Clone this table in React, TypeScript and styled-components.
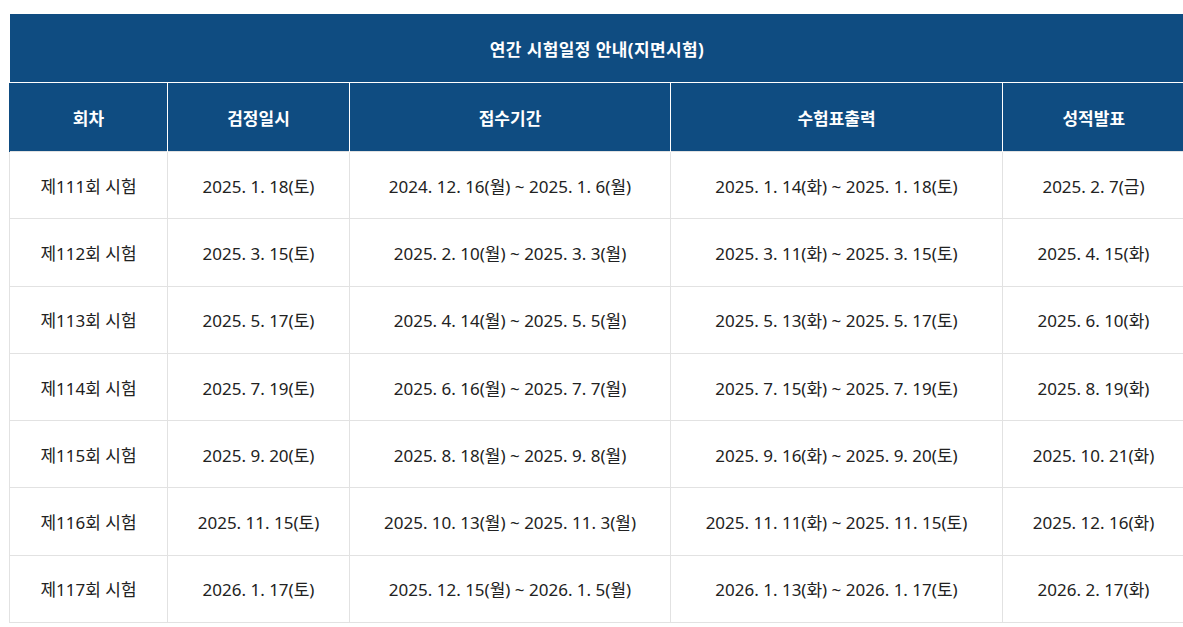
import React from 'react'
import styled, { createGlobalStyle } from 'styled-components'

const GlobalStyle = createGlobalStyle`
  body {
    margin: 0;
    background: #fff;
    font-family: 'Noto Sans', 'Noto Sans CJK KR', sans-serif;
  }
`

interface Exam {
  round: string
  date: string
  apply: string
  ticket: string
  result: string
}

const exams: Exam[] = [
  { round: '제111회 시험', date: '2025. 1. 18(토)', apply: '2024. 12. 16(월) ~ 2025. 1. 6(월)', ticket: '2025. 1. 14(화) ~ 2025. 1. 18(토)', result: '2025. 2. 7(금)' },
  { round: '제112회 시험', date: '2025. 3. 15(토)', apply: '2025. 2. 10(월) ~ 2025. 3. 3(월)', ticket: '2025. 3. 11(화) ~ 2025. 3. 15(토)', result: '2025. 4. 15(화)' },
  { round: '제113회 시험', date: '2025. 5. 17(토)', apply: '2025. 4. 14(월) ~ 2025. 5. 5(월)', ticket: '2025. 5. 13(화) ~ 2025. 5. 17(토)', result: '2025. 6. 10(화)' },
  { round: '제114회 시험', date: '2025. 7. 19(토)', apply: '2025. 6. 16(월) ~ 2025. 7. 7(월)', ticket: '2025. 7. 15(화) ~ 2025. 7. 19(토)', result: '2025. 8. 19(화)' },
  { round: '제115회 시험', date: '2025. 9. 20(토)', apply: '2025. 8. 18(월) ~ 2025. 9. 8(월)', ticket: '2025. 9. 16(화) ~ 2025. 9. 20(토)', result: '2025. 10. 21(화)' },
  { round: '제116회 시험', date: '2025. 11. 15(토)', apply: '2025. 10. 13(월) ~ 2025. 11. 3(월)', ticket: '2025. 11. 11(화) ~ 2025. 11. 15(토)', result: '2025. 12. 16(화)' },
  { round: '제117회 시험', date: '2026. 1. 17(토)', apply: '2025. 12. 15(월) ~ 2026. 1. 5(월)', ticket: '2026. 1. 13(화) ~ 2026. 1. 17(토)', result: '2026. 2. 17(화)' },
]

const Wrap = styled.div`
  padding: 14px 0 0 9px;
`

const Table = styled.table`
  width: 1175px;
  border-collapse: collapse;
  table-layout: fixed;
  font-size: 17px;
`

const TitleCell = styled.th`
  height: 68px;
  background: #0f4c81;
  color: #fff;
  font-weight: 700;
  font-size: 17px;
  letter-spacing: 0.4px;
  text-align: center;
  border-bottom: 1px solid #fff;
  padding: 0;
`

const HeadCell = styled.th`
  height: 68px;
  background: #0f4c81;
  color: #fff;
  font-weight: 700;
  text-align: center;
  padding: 0;
  border-left: 1px solid #fff;
  &:first-child { border-left: 1px solid #0f4c81; }
`

const Cell = styled.td`
  height: 66.3px;
  color: #222;
  text-align: center;
  padding: 0;
  border: 1px solid #e2e2e2;
`

const cols = [158, 182, 321, 332, 182]

export default function App() {
  return (
    <Wrap>
      <GlobalStyle />
      <Table>
        <colgroup>
          {cols.map((w, i) => <col key={i} style={{ width: w }} />)}
        </colgroup>
        <thead>
          <tr>
            <TitleCell colSpan={5}>연간 시험일정 안내(지면시험)</TitleCell>
          </tr>
          <tr>
            <HeadCell>회차</HeadCell>
            <HeadCell>검정일시</HeadCell>
            <HeadCell>접수기간</HeadCell>
            <HeadCell>수험표출력</HeadCell>
            <HeadCell>성적발표</HeadCell>
          </tr>
        </thead>
        <tbody>
          {exams.map(e => (
            <tr key={e.round}>
              <Cell>{e.round}</Cell>
              <Cell>{e.date}</Cell>
              <Cell>{e.apply}</Cell>
              <Cell>{e.ticket}</Cell>
              <Cell>{e.result}</Cell>
            </tr>
          ))}
        </tbody>
      </Table>
    </Wrap>
  )
}
